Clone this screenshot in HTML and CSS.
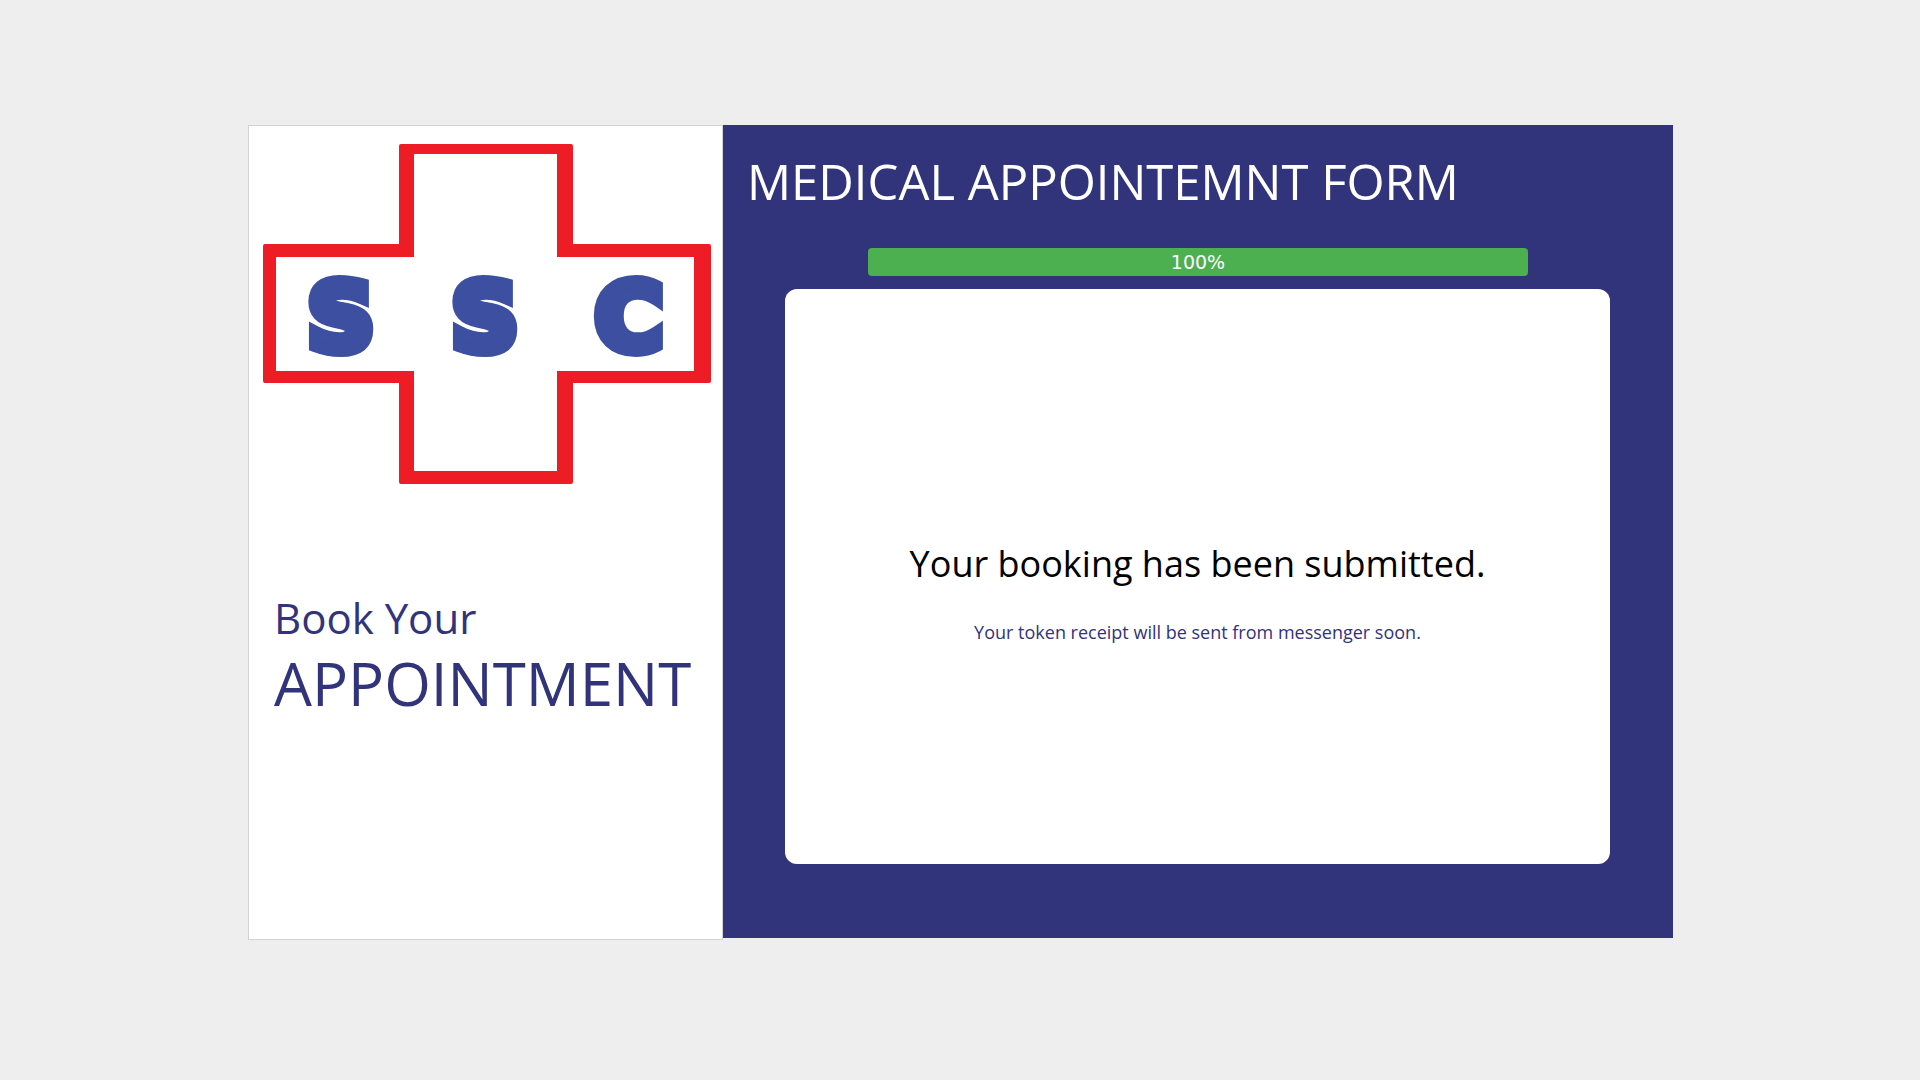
FILE: index.html
```html
<!DOCTYPE html>
<html lang="en">
<head>
  <meta charset="utf-8">
  <meta name="viewport" content="width=device-width, initial-scale=1">
  <title>Medical Appointment Form</title>
  <link rel="stylesheet" href="styles.css">
</head>
<body>
  <main class="booking">
    <section class="intro">
      <svg class="logo" viewBox="0 0 448 342" role="img" aria-label="SSC">
        <path class="logo-cross" fill-rule="evenodd" d="M138 0H308Q310 0 310 2V100H446Q448 100 448 102V237Q448 239 446 239H310V338Q310 340 308 340H138Q136 340 136 338V239H2Q0 239 0 237V102Q0 100 2 100H136V2Q136 0 138 0ZM151 10V113H13V227H151V327H294V227H431V113H294V10Z"/>
        <text class="logo-text" x="78 222 366" y="206">SSC</text>
      </svg>
      <h2 class="tagline"><span class="tagline-small">Book Your</span> <span class="tagline-large">APPOINTMENT</span></h2>
    </section>
    <section class="form-panel">
      <h1 class="title">MEDICAL APPOINTEMNT FORM</h1>
      <div class="progress" role="progressbar" aria-label="Form progress" aria-valuemin="0" aria-valuemax="100" aria-valuenow="100">
        <div class="progress-bar" style="width: 100%">100%</div>
      </div>
      <div class="result">
        <p class="result-title">Your booking has been submitted.</p>
        <p class="result-note">Your token receipt will be sent from messenger soon.</p>
      </div>
    </section>
  </main>
</body>
</html>
```
FILE: styles.css
```css
* {
  box-sizing: border-box;
}

body {
  margin: 0;
  background: #eeeeee;
  color: #31347a;
  font-family: "Open Sans", "Noto Sans", sans-serif;
}

h1,
h2,
p {
  margin: 0;
  font-weight: 400;
}

.booking {
  display: grid;
  grid-template-columns: 1fr 2fr;
  align-items: start;
  padding: 125px 247px 125px 248px;
}

.intro {
  min-height: 815px;
  padding: 18px 11px 0 14px;
  border: 1px solid lightgray;
  background: #ffffff;
}

.logo {
  display: block;
  width: 100%;
}

.logo-cross {
  fill: #ee1c25;
}

.logo-text {
  fill: #3c4fa1;
  stroke: #3c4fa1;
  stroke-width: 12px;
  font-family: "DejaVu Sans", sans-serif;
  font-size: 92px;
  font-weight: 700;
  text-anchor: middle;
}

.tagline {
  padding: 102px 11px 0;
}

.tagline-small,
.tagline-large {
  display: block;
}

.tagline-small {
  font-size: 42px;
  line-height: 60px;
}

.tagline-large {
  font-size: 60px;
  line-height: 70px;
}

.form-panel {
  min-height: 813px;
  padding: 22px 24px;
  background: #31347a;
}

.title {
  color: #ffffff;
  font-size: 49px;
  line-height: 68px;
}

.progress {
  width: 660px;
  max-width: 100%;
  margin: 33px auto 13px;
}

.progress-bar {
  border-radius: 4px;
  background: #4caf50;
  color: #ffffff;
  font-family: "DejaVu Sans", sans-serif;
  font-size: 19px;
  line-height: 28px;
  text-align: center;
}

.result {
  display: flex;
  flex-direction: column;
  align-items: center;
  justify-content: center;
  gap: 30px;
  min-height: 575px;
  margin: 0 39px 0 38px;
  padding-top: 28px;
  border-radius: 12px;
  background: #ffffff;
}

.result-title {
  color: #000000;
  font-size: 36px;
  line-height: 52px;
}

.result-note {
  font-size: 18px;
  line-height: 24px;
}
```
